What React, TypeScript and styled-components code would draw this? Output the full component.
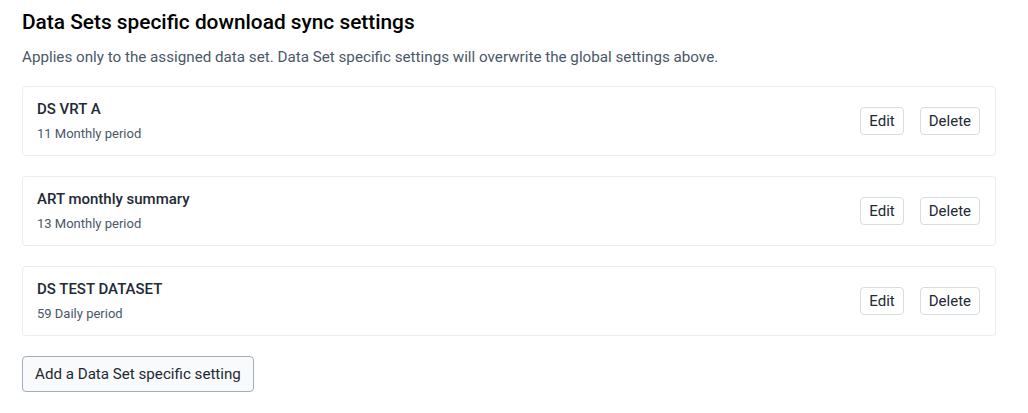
import React from "react";
import styled, { createGlobalStyle } from "styled-components";

const GlobalStyle = createGlobalStyle`
  body {
    margin: 0;
    background: #ffffff;
    font-family: Roboto, "Noto Sans", sans-serif;
    color: #212934;
  }
`;

const Page = styled.div`
  padding: 10px 32px 0 22px;
`;

const Title = styled.h2`
  margin: 0;
  font-size: 20.85px;
  font-weight: 500;
  line-height: 24px;
  color: #000000;
`;

const Description = styled.p`
  margin: 13px 0 19px;
  font-size: 15.2px;
  line-height: 20px;
  color: #4a5768;
`;

const List = styled.div`
  display: flex;
  flex-direction: column;
  gap: 20px;
`;

const Card = styled.div`
  display: flex;
  align-items: center;
  justify-content: space-between;
  height: 70px;
  box-sizing: border-box;
  padding: 0 15px 0 14px;
  border: 1px solid #e8edf2;
  border-radius: 4px;
`;

const Info = styled.div`
  display: flex;
  flex-direction: column;
  gap: 6px;
`;

const Name = styled.div`
  font-size: 15px;
  font-weight: 500;
  line-height: 20px;
  color: #212934;
`;

const Period = styled.div`
  font-size: 13px;
  line-height: 18px;
  color: #4a5768;
`;

const Actions = styled.div`
  display: flex;
  gap: 16px;
`;

const SmallButton = styled.button`
  height: 28px;
  padding: 0 8px;
  font-family: inherit;
  font-size: 15px;
  color: #212934;
  background: #ffffff;
  border: 1px solid #d5dde5;
  border-radius: 4px;
  cursor: pointer;
`;

const AddButton = styled.button`
  margin-top: 20px;
  height: 36px;
  padding: 0 12px;
  font-family: inherit;
  font-size: 15.15px;
  color: #212934;
  background: #f9fafb;
  border: 1px solid #a0adba;
  border-radius: 4px;
  cursor: pointer;
`;

const items = [
  { name: "DS VRT A", period: "11 Monthly period" },
  { name: "ART monthly summary", period: "13 Monthly period" },
  { name: "DS TEST DATASET", period: "59 Daily period" },
];

const App = () => (
  <Page>
    <GlobalStyle />
    <Title>Data Sets specific download sync settings</Title>
    <Description>
      Applies only to the assigned data set. Data Set specific settings will overwrite the global settings above.
    </Description>
    <List>
      {items.map((item) => (
        <Card key={item.name}>
          <Info>
            <Name>{item.name}</Name>
            <Period>{item.period}</Period>
          </Info>
          <Actions>
            <SmallButton>Edit</SmallButton>
            <SmallButton>Delete</SmallButton>
          </Actions>
        </Card>
      ))}
    </List>
    <AddButton>Add a Data Set specific setting</AddButton>
  </Page>
);

export default App;
